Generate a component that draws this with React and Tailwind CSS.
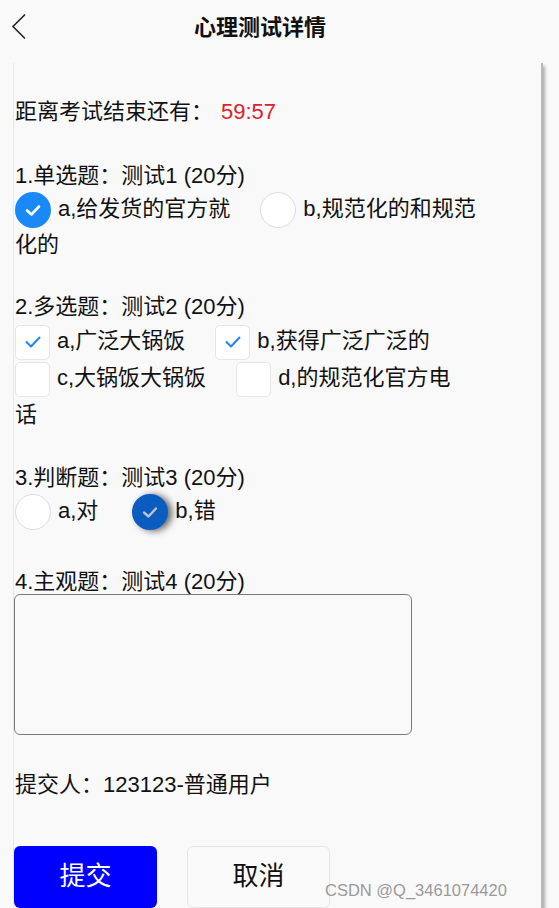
import React from 'react';

const FONT = { fontFamily: '"Liberation Sans", "Noto Sans CJK SC", sans-serif' };

function Radio({ checked, pressed }) {
  if (pressed) {
    return (
      <span className="inline-flex h-[36px] w-[36px] items-center justify-center rounded-full bg-[#0a5cc0] align-middle shadow-[4px_1px_7px_rgba(0,0,0,0.6)]">
        <svg width="20" height="20" viewBox="0 0 20 20">
          <polyline points="4,10.5 8.5,14.5 16,6.5" fill="none" stroke="#b9c3cf" strokeWidth="2.4" strokeLinecap="round" strokeLinejoin="round" />
        </svg>
      </span>
    );
  }
  if (checked) {
    return (
      <span className="inline-flex h-[36px] w-[36px] items-center justify-center rounded-full bg-[#1989fa] align-middle">
        <svg width="20" height="20" viewBox="0 0 20 20">
          <polyline points="4,10.5 8.5,14.5 16,6.5" fill="none" stroke="#ffffff" strokeWidth="2.6" strokeLinecap="round" strokeLinejoin="round" />
        </svg>
      </span>
    );
  }
  return <span className="inline-block h-[36px] w-[36px] rounded-full border border-[#dcdcdc] bg-white align-middle" />;
}

function Box({ checked }) {
  return (
    <span className="inline-flex h-[35px] w-[35px] items-center justify-center rounded-[5px] border border-[#e6e6e6] bg-white align-middle">
      {checked && (
        <svg width="20" height="20" viewBox="0 0 20 20">
          <polyline points="3.5,10 8,14.5 16.5,5.5" fill="none" stroke="#1989fa" strokeWidth="2" strokeLinecap="round" strokeLinejoin="round" />
        </svg>
      )}
    </span>
  );
}

function Option({ icon, text, gap = 'mr-[30px]' }) {
  return (
    <span className={gap}>
      {icon}
      <span className="ml-[7px]">{text}</span>
    </span>
  );
}

export default function App() {
  return (
    <div className="relative h-[908px] w-[559px] overflow-hidden bg-[#f9f9f9] text-[#111]" style={FONT}>
      <div className="relative flex h-[54px] items-center justify-center pr-[39px]">
        <svg className="absolute left-[11px] top-[13px]" width="16" height="27" viewBox="0 0 16 27">
          <polyline points="14,1.5 2,13.5 14,25.5" fill="none" stroke="#222" strokeWidth="1.6" />
        </svg>
        <h1 className="text-[22px] font-bold">心理测试详情</h1>
      </div>

      <div className="ml-[13px] mt-[9px] h-[900px] w-[530px] border-l border-r-2 border-l-[#e8e8e8] border-r-[#b8b8b8] pl-px pr-[51px] pt-[32px] text-[22px] shadow-[5px_0_3px_-3px_rgba(0,0,0,0.3)]">
        <p className="leading-[34px]">
          距离考试结束还有：<span className="ml-[8px] text-[#e0202a]">59:57</span>
        </p>

        <p className="mt-[30px] leading-[33px]">1.单选题：测试1 (20分)</p>
        <div className="leading-[34px]">
          <Option icon={<Radio checked />} text="a,给发货的官方就" />
          <Option icon={<Radio />} text="b,规范化的和规范化的" />
        </div>

        <p className="mt-[28px] leading-[33px]">2.多选题：测试2 (20分)</p>
        <div className="leading-[35px]">
          <Option icon={<Box checked />} text="a,广泛大锅饭" />
          <Option icon={<Box checked />} text="b,获得广泛广泛的" />
          <Option icon={<Box />} text="c,大锅饭大锅饭" />
          <Option icon={<Box />} text="d,的规范化官方电话" />
        </div>

        <p className="mt-[30px] leading-[31px]">3.判断题：测试3 (20分)</p>
        <div className="leading-[35px]">
          <Option icon={<Radio />} text="a,对" gap="mr-[34px]" />
          <Option icon={<Radio pressed />} text="b,错" />
        </div>

        <p className="mt-[40px] leading-[24px]">4.主观题：测试4 (20分)</p>
        <textarea className="-ml-px block h-[141px] w-[398px] resize-none rounded-[6px] border border-[#7a7a7a] bg-transparent" />

        <p className="mt-[33px] leading-[34px]">提交人：123123-普通用户</p>

        <div className="-ml-px mt-[44px] flex gap-[30px]">
          <button className="h-[62px] w-[143px] rounded-[6px] bg-[#0000ff] text-[26px] text-white">提交</button>
          <button className="h-[62px] w-[143px] rounded-[6px] border border-[#e6e6e6] bg-[#fafafa] text-[26px] text-[#111]">取消</button>
        </div>
      </div>

      <span className="absolute left-[325px] top-[880px] text-[16.5px] leading-[20px] text-[#9a9a9a]">CSDN @Q_3461074420</span>
    </div>
  );
}
